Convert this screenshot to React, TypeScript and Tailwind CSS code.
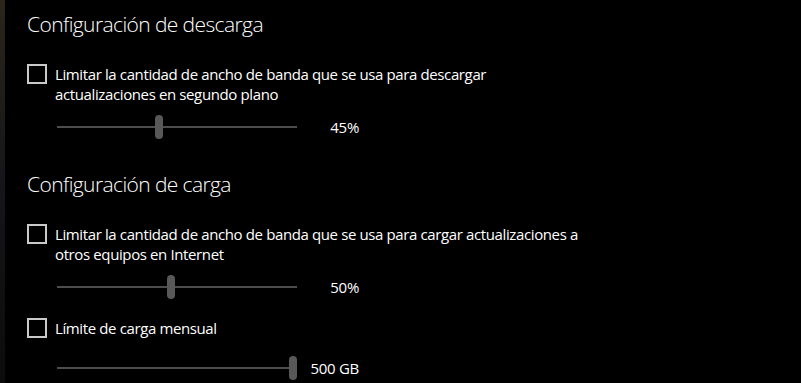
import React from "react";

const font = { fontFamily: '"Segoe UI", "Open Sans", "Noto Sans", sans-serif' };

function Checkbox() {
  return <div className="w-[20px] h-[20px] border-2 border-[#c9c9c9] shrink-0" />;
}

function Slider({ pos, label }: { pos: number; label: string }) {
  return (
    <div className="flex items-center h-[24px] pl-[30px]">
      <div className="relative w-[240px] h-[24px] flex items-center">
        <div className="w-full h-[2px] bg-[#4d4d4d]" />
        <div
          className="absolute top-0 w-[8px] h-[24px] rounded-full bg-[#585858]"
          style={{ left: pos }}
        />
      </div>
      <div className="w-[62px] text-right text-white text-[15px] leading-[20px] tracking-[-0.3px]">{label}</div>
    </div>
  );
}

export default function App() {
  return (
    <div className="w-[801px] h-[383px] bg-black flex overflow-hidden" style={font}>
      <div className="w-[5px] h-full bg-gradient-to-b from-[#2b2519] via-[#15151a] to-[#0c0c0c]" />
      <div className="flex flex-col pl-[22px] text-white">
        <div className="h-[28px] mt-[10px] text-[21px] leading-[28px] font-[350] tracking-[-0.6px]">Configuración de descarga</div>
        <div className="flex mt-[26px] h-[40px]">
          <Checkbox />
          <div className="ml-[8px] text-[15px] leading-[20px] tracking-[-0.38px]">
            Limitar la cantidad de ancho de banda que se usa para descargar
            <br />
            actualizaciones en segundo plano
          </div>
        </div>
        <div className="mt-[11px]">
          <Slider pos={98} label="45%" />
        </div>
        <div className="h-[28px] mt-[31px] text-[21px] leading-[28px] font-[350] tracking-[-0.6px]">Configuración de carga</div>
        <div className="flex mt-[26px] h-[40px]">
          <Checkbox />
          <div className="ml-[8px] text-[15px] leading-[20px] tracking-[-0.38px]">
            Limitar la cantidad de ancho de banda que se usa para cargar actualizaciones a
            <br />
            otros equipos en Internet
          </div>
        </div>
        <div className="mt-[11px]">
          <Slider pos={110} label="50%" />
        </div>
        <div className="flex mt-[19px] h-[20px]">
          <Checkbox />
          <div className="ml-[8px] text-[15px] leading-[20px] tracking-[-0.38px]">Límite de carga mensual</div>
        </div>
        <div className="mt-[18px]">
          <Slider pos={232} label="500 GB" />
        </div>
      </div>
    </div>
  );
}
